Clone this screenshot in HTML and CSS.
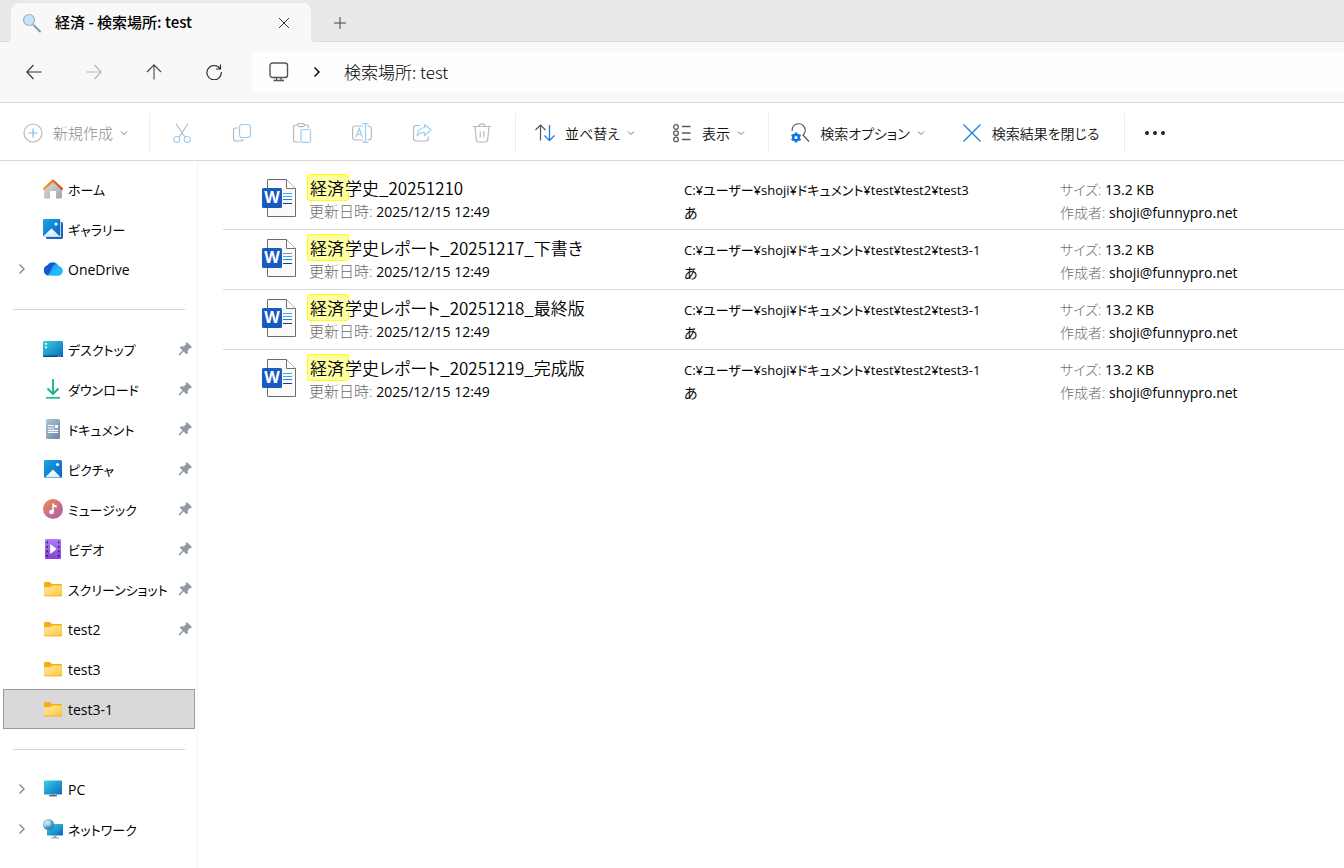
FILE: index.html
```
<!DOCTYPE html>
<html lang="ja">
<head>
    <meta charset="UTF-8">
    <meta name="viewport" content="width=device-width, initial-scale=1.0">
    <title>経済 - 検索場所: test</title>
    <link rel="stylesheet" href="styles.css">
</head>
<body>
    <!-- shared icons -->
    <svg class="defs" aria-hidden="true">
        <defs>
            <linearGradient id="gFolder" x1="0" y1="0" x2="1" y2="1"><stop offset="0" stop-color="#ffe9a6"/><stop offset="1" stop-color="#ffc637"/></linearGradient>
            <linearGradient id="gScreen" x1="0" y1="0" x2="1" y2="1"><stop offset="0" stop-color="#35d3e0"/><stop offset="1" stop-color="#0b67c0"/></linearGradient>
            <linearGradient id="gPhoto" x1="0" y1="0" x2="1" y2="1"><stop offset="0" stop-color="#1ba5ea"/><stop offset="1" stop-color="#0a62bd"/></linearGradient>
            <linearGradient id="gHill" x1="0" y1="0" x2="0" y2="1"><stop offset="0" stop-color="#fff"/><stop offset="1" stop-color="#d3ecfb"/></linearGradient>
            <linearGradient id="gRoof" x1="0" y1="0" x2="1" y2="0"><stop offset="0" stop-color="#f79a2b"/><stop offset="1" stop-color="#d04a10"/></linearGradient>
            <linearGradient id="gWall" x1="0" y1="0" x2="1" y2="1"><stop offset="0" stop-color="#e2e2e2"/><stop offset="1" stop-color="#a3a3a3"/></linearGradient>
            <linearGradient id="gDown" x1="0" y1="0" x2="0" y2="1"><stop offset="0" stop-color="#34c997"/><stop offset="1" stop-color="#0f9f8c"/></linearGradient>
            <linearGradient id="gDoc" x1="0" y1="0" x2="1" y2="1"><stop offset="0" stop-color="#b1c4d9"/><stop offset="1" stop-color="#6a86a5"/></linearGradient>
            <linearGradient id="gMusic" x1="0" y1="0" x2="1" y2="1"><stop offset="0" stop-color="#f28b4b"/><stop offset="1" stop-color="#a85bb0"/></linearGradient>
            <linearGradient id="gVideo" x1="0" y1="0" x2="0" y2="1"><stop offset="0" stop-color="#b07ff5"/><stop offset="1" stop-color="#8440d8"/></linearGradient>
            <linearGradient id="gCloud" x1="0" y1="0" x2="1" y2="1"><stop offset="0" stop-color="#1687f5"/><stop offset="1" stop-color="#23cdfb"/></linearGradient>
            <radialGradient id="gGlobe" cx="0.35" cy="0.3" r="0.8"><stop offset="0" stop-color="#a9daf2"/><stop offset="1" stop-color="#1d6fa8"/></radialGradient>
        </defs>
        <symbol id="folder" viewBox="0 0 20 20">
            <path d="M1 4.500q0-1.500 1-1.500h5l2 2h9q1 0 1 1v3H1z" fill="#f5ad12"/>
            <path d="M1 8h6.500l1.500-1.500h10V16q0 1-1 1H2q-1 0-1-1z" fill="url(#gFolder)"/>
            <path d="M1 16q0 1 1 1h16q1 0 1-1" fill="none" stroke="#eda81c" stroke-width="0.800"/>
        </symbol>
        <symbol id="pin" viewBox="0 0 14 14">
            <path d="M8.300 0.600q0.500-0.600 1.100 0l4 4q0.600 0.600 0 1.100l-0.800 0.600-0.900-0.100-2 2.200q0.500 2.200-0.500 3.700l-0.600 0.200L5.500 9.500l-3.600 3.700H0.800v-1.100l3.700-3.600L1.700 5.600l0.200-0.700q1.600-1 3.800-0.500l2.200-2-0.200-0.900z" fill="#929ba3"/>
        </symbol>
        <symbol id="down" viewBox="0 0 10 10">
            <path d="M2 3.500 5 6.500l3-3" fill="none" stroke="currentColor"/>
        </symbol>
        <symbol id="right" viewBox="0 0 10 12">
            <path d="M2.500 1.500 7 6l-4.500 4.500" fill="none" stroke="currentColor" stroke-width="1.400"/>
        </symbol>
    </svg>
    <svg class="hidden" aria-hidden="true">
        <symbol id="word" viewBox="0 0 34 40">
            <path d="M6 1.500h18.500l9 9v28H5.500v-37z" fill="#fafafa" stroke="#6d6d6d"/>
            <path d="M24.500 1.500v9h9" fill="#fff" stroke="#6d6d6d"/>
            <path d="M21 15.500h9M21 18.500h9" stroke="#41a5ee"/>
            <path d="M21 21.500h9" stroke="#2b7cd3"/>
            <path d="M21 25.500h9" stroke="#103f91"/>
            <rect x="0" y="10" width="20" height="20" rx="1.500" fill="#185abd"/>
            <text x="10" y="25" text-anchor="middle" class="word-letter">W</text>
        </symbol>
    </svg>

    <div class="tabs">
        <div class="tab">
            <svg class="tab-icon" viewBox="0 0 20 20"><path d="m10.500 11 7.500 7.500" stroke="#8998a6" stroke-width="2" stroke-linecap="round"/><path d="m10 10 2.500 2.500" stroke="#b8c3cc" stroke-width="1.500"/><circle cx="7" cy="7" r="5.500" fill="#bfe5ff" stroke="#a3b0bb" stroke-width="1.200"/></svg>
            <h1>経済 - 検索場所: test</h1>
            <button class="tab-close" aria-label="タブを閉じる"><svg viewBox="0 0 12 12"><path d="m1 1 10 10M11 1 1 11" stroke="#333"/></svg></button>
        </div>
        <button class="tab-new" aria-label="新しいタブ"><svg viewBox="0 0 12 12"><path d="M6 0v12M0 6h12" stroke="#444"/></svg></button>
    </div>

    <div class="address">
        <button class="go" aria-label="戻る"><svg viewBox="0 0 16 16"><path d="M15.500 8H1M7.500 1 0.800 8l6.700 7" fill="none" stroke="#333" stroke-width="1.100"/></svg></button>
        <button class="go" aria-label="進む" disabled><svg viewBox="0 0 16 16"><path d="M0.500 8H15M8.500 1l6.700 7-6.700 7" fill="none" stroke="#b5b5b5" stroke-width="1.100"/></svg></button>
        <button class="go" aria-label="上へ"><svg viewBox="0 0 16 16"><path d="M8 15.500V1M1 8l7-7.200L15 8" fill="none" stroke="#444" stroke-width="1.100"/></svg></button>
        <button class="go" aria-label="更新"><svg viewBox="0 0 16 16"><path d="M14 4.500A7.200 7.200 0 1 0 15.300 8M14.500 0.500v4.500H10" fill="none" stroke="#222" stroke-width="1.100"/></svg></button>
        <div class="path">
            <svg class="pc" viewBox="0 0 20 20"><rect x="1" y="1" width="17.500" height="14.500" rx="2.500" fill="none" stroke="#555" stroke-width="1.400"/><path d="M7.500 15.500v3M12 15.500v3M4.500 18.500h10.500" stroke="#555" stroke-width="1.300"/></svg>
            <svg class="sep" viewBox="0 0 10 12"><use href="#right"/></svg>
            <button class="crumb">検索場所: test</button>
        </div>
    </div>

    <div class="toolbar">
        <button class="cmd cmd-new" disabled>
            <svg class="icon" viewBox="0 0 20 20" fill="none"><circle cx="10" cy="10" r="9" stroke="#b9b9b9" stroke-width="1.200"/><path d="M10 5.500v9M5.500 10h9" stroke="#7fbceb" stroke-width="1.200"/></svg>
            新規作成
            <svg class="chev"><use href="#down"/></svg>
        </button>
        <span class="line"></span>
        <div class="edit">
            <button aria-label="切り取り" disabled><svg class="icon" viewBox="0 0 20 20" fill="none"><path d="M4 0.500 12.800 14M16 0.500 7.200 14" stroke="#b9b9b9" stroke-width="1.200"/><circle cx="4.800" cy="16.500" r="3" stroke="#9bcdf3" stroke-width="1.200"/><circle cx="15.200" cy="16.500" r="3" stroke="#9bcdf3" stroke-width="1.200"/></svg></button>
            <button aria-label="コピー" disabled><svg class="icon" viewBox="0 0 20 20" fill="none"><path d="M6 5H4Q1.500 5 1.500 7.500v8Q1.500 18 4 18h4.500q2.500 0 2.500-2" stroke="#b9b9b9" stroke-width="1.200"/><rect x="7.500" y="1.500" width="11" height="13" rx="2.500" stroke="#9bcdf3" stroke-width="1.200"/></svg></button>
            <button aria-label="貼り付け" disabled><svg class="icon" viewBox="0 0 20 20" fill="none"><path d="M5.500 2H3.500Q1.500 2 1.500 4v13q0 2 2 2H8M12.500 2h2q2 0 2 2v1" stroke="#b9b9b9" stroke-width="1.200"/><rect x="5.500" y="0.600" width="7" height="3" rx="1.500" stroke="#b9b9b9" stroke-width="1.200"/><rect x="9" y="6.500" width="9.500" height="12.800" rx="1.500" stroke="#9bcdf3" stroke-width="1.200"/></svg></button>
            <button aria-label="名前の変更" disabled><svg class="icon" viewBox="0 0 20 20" fill="none"><path d="M11 3H3.500Q0.600 3 0.600 6v8q0 3 2.900 3H11M15.500 3q3.900 0 3.900 3v8q0 3-3.900 3" stroke="#b9b9b9" stroke-width="1.200"/><path d="M3.800 14.500 7.200 5.500l3.400 9M5 11.500h4.500M13.500 0.600v18.800M10.500 0.600h6M10.500 19.400h6" stroke="#9bcdf3" stroke-width="1.200"/></svg></button>
            <button aria-label="共有" disabled><svg class="icon" viewBox="0 0 20 20" fill="none"><path d="M8 2.500H4.500Q1.500 2.500 1.500 5.500v9.500q0 3 3 3h9q3 0 3-3v-1.500" stroke="#b9b9b9" stroke-width="1.200"/><path d="M12.500 1.500 19 7l-6.500 5.500V9.500Q8 9 5 13q0.500-7.500 7.500-8.500z" stroke="#9bcdf3" stroke-width="1.200" stroke-linejoin="round"/></svg></button>
            <button aria-label="削除" disabled><svg class="icon" viewBox="0 0 20 20" fill="none"><path d="M1 3.500h18M7 3.500Q7 0.800 10 0.800t3 2.700M3 3.500l1.300 13q0.200 2.500 2.400 2.500h6.600q2.200 0 2.400-2.500L17 3.500M8.200 8v6.500M11.800 8v6.500" stroke="#b9b9b9" stroke-width="1.200"/></svg></button>
        </div>
        <span class="line"></span>
        <button class="cmd cmd-sort">
            <svg class="icon" viewBox="0 0 20 20" fill="none"><path d="M5.500 17.500V2M0.500 7l5-5 5 5" stroke="#555" stroke-width="1.200"/><path d="M14.500 2v15.500M9.500 12.500l5 5 5-5" stroke="#1a80d9" stroke-width="1.300"/></svg>
            並べ替え
            <svg class="chev"><use href="#down"/></svg>
        </button>
        <button class="cmd cmd-view">
            <svg class="icon" viewBox="0 0 20 20" fill="none" stroke="#5a5a5a" stroke-width="1.300"><circle cx="4" cy="4" r="2.300"/><circle cx="4" cy="10.200" r="2.300"/><circle cx="4" cy="16.400" r="2.300"/><path d="M10 3.500h8.500M10 10h8.500M10 16.500h8.500"/></svg>
            表示
            <svg class="chev"><use href="#down"/></svg>
        </button>
        <span class="line"></span>
        <button class="cmd cmd-option">
            <svg class="icon" viewBox="0 0 20 20" fill="none"><path d="M2.200 8A6.500 6.500 0 1 1 12.500 12.500M13 12l6 6.500" stroke="#555" stroke-width="1.200"/><circle cx="6" cy="14.500" r="2.800" stroke="#0f7bdc" stroke-width="2.500"/><path d="M6 9.500v2M6 17.500v2M1.600 12l2 1M8.600 16l2 1M1.600 17l2-1M8.600 13l2-1" stroke="#0f7bdc" stroke-width="2.400"/></svg>
            検索オプション
            <svg class="chev"><use href="#down"/></svg>
        </button>
        <button class="cmd cmd-close">
            <svg class="icon" viewBox="0 0 20 20"><path d="m1.500 1.500 17 17M18.500 1.500l-17 17" stroke="#1a80d9" stroke-width="1.300"/></svg>
            検索結果を閉じる
        </button>
        <span class="line"></span>
        <button class="more" aria-label="もっと見る"><svg class="icon" viewBox="0 0 20 20" fill="#222"><circle cx="2" cy="10" r="2"/><circle cx="10" cy="10" r="2"/><circle cx="18" cy="10" r="2"/></svg></button>
    </div>

    <div class="main">
        <nav class="sidebar">
            <ul>
                <li><a href="#"><svg class="icon" viewBox="0 0 20 20"><path d="M1 9 10 1l9 8v9q0 1.500-1.500 1.500H13V12H7v7.500H2.500Q1 19.500 1 18z" fill="url(#gWall)"/><path d="M1 9.800 10 1.600l9 8.200" fill="none" stroke="url(#gRoof)" stroke-width="2.200" stroke-linecap="round" stroke-linejoin="round"/></svg>ホーム</a></li>
                <li><a href="#"><svg class="icon" viewBox="0 0 20 20"><rect x="3" y="3" width="17" height="17" rx="1.500" fill="#1d66b8"/><rect x="0" y="0" width="18" height="18" rx="1" fill="#fff"/><rect x="0" y="0" width="17.300" height="17.300" rx="1" fill="url(#gPhoto)"/><path d="m0.500 17 8-7.500 8 7.500z" fill="url(#gHill)"/><circle cx="13" cy="5" r="1.500" fill="#fff"/></svg>ギャラリー</a></li>
                <li><a href="#" class="latin"><svg class="twist"><use href="#right"/></svg><svg class="icon" viewBox="0 0 20 20"><path d="M5.200 16.500a5.200 5.200 0 0 1-0.800-10A6.200 6.200 0 0 1 15.500 6.800a5 5 0 0 1 0 9.700z" fill="url(#gCloud)"/><path d="M5 16.500A5.300 5.300 0 0 1 4.500 6.300a6 6 0 0 1 8.500-1.500q-3 1-4.500 5t-3.500 6.700z" fill="#1b55d0"/><path d="M7 16.500q2-1.500 3.500-5T15 8q3.500 0 4.800 3a4.800 4.800 0 0 1-4.300 5.500z" fill="#22b8fa"/></svg>OneDrive</a></li>
            </ul>
            <hr>
            <ul>
                <li><a href="#"><svg class="icon" viewBox="0 0 20 20"><rect x="0" y="2" width="20" height="16" rx="1" fill="url(#gScreen)"/><path d="M0 16.500h20V17q0 1-1 1H1q-1 0-1-1z" fill="#0a4b87"/><path d="M2.200 4h1.800v1.800H2.200zM2.200 7.500h1.800v1.800H2.200zM15 16.800h1v0.800h-1zM17 16.800h1v0.800h-1z" fill="#fff"/></svg>デスクトップ<svg class="pin"><use href="#pin"/></svg></a></li>
                <li><a href="#"><svg class="icon" viewBox="0 0 20 20" fill="none"><path d="M10 0.500v14M4.500 9.500l5.500 5.500 5.500-5.500" stroke="url(#gDown)" stroke-width="1.800"/><path d="M10 0v14" stroke="#26b693" stroke-width="1.800"/><path d="M3 18.800h14" stroke="#26bd8c" stroke-width="1.800"/></svg>ダウンロード<svg class="pin"><use href="#pin"/></svg></a></li>
                <li><a href="#"><svg class="icon" viewBox="0 0 20 20"><rect x="3" y="0" width="14" height="20" rx="1.500" fill="url(#gDoc)"/><path d="M5 6.500h6M5 9h6M5 11.300h10M5 13.300h10" stroke="#fff" stroke-width="1.200"/><rect x="12" y="6" width="3" height="3" fill="#fff"/></svg>ドキュメント<svg class="pin"><use href="#pin"/></svg></a></li>
                <li><a href="#"><svg class="icon" viewBox="0 0 20 20"><rect x="1" y="1" width="18" height="18" rx="1.200" fill="url(#gPhoto)"/><path d="m2 18.500 8-8 8 8z" fill="url(#gHill)"/><circle cx="14.500" cy="5.500" r="1.600" fill="#fff"/></svg>ピクチャ<svg class="pin"><use href="#pin"/></svg></a></li>
                <li><a href="#"><svg class="icon" viewBox="0 0 20 20"><circle cx="10" cy="10" r="10" fill="url(#gMusic)"/><circle cx="8.500" cy="13" r="2.300" fill="#fff"/><path d="M9.300 13V4.500h1.500q0.500 1.800 3 2v2q-2 0-3-1V13z" fill="#fff"/></svg>ミュージック<svg class="pin"><use href="#pin"/></svg></a></li>
                <li><a href="#"><svg class="icon" viewBox="0 0 20 20"><rect x="2" y="0" width="16" height="20" rx="1" fill="url(#gVideo)"/><path d="M4.300 2.500v16M15.700 2.500v16" stroke="#3d1778" stroke-width="1.600" stroke-dasharray="1.800 2.700"/><path d="M7.200 5v10l6.500-5z" fill="#fff"/></svg>ビデオ<svg class="pin"><use href="#pin"/></svg></a></li>
                <li><a href="#"><svg class="icon"><use href="#folder"/></svg>スクリーンショット<svg class="pin"><use href="#pin"/></svg></a></li>
                <li><a href="#" class="latin"><svg class="icon"><use href="#folder"/></svg>test2<svg class="pin"><use href="#pin"/></svg></a></li>
                <li><a href="#" class="latin"><svg class="icon"><use href="#folder"/></svg>test3</a></li>
                <li><a href="#" class="latin selected"><svg class="icon"><use href="#folder"/></svg>test3-1</a></li>
            </ul>
            <hr>
            <ul>
                <li><a href="#" class="latin"><svg class="twist"><use href="#right"/></svg><svg class="icon" viewBox="0 0 20 20"><rect x="1" y="1.500" width="18" height="14" rx="0.800" fill="url(#gScreen)"/><path d="M8 15.500h4v1.500H8z" fill="#8e99a3"/><path d="M6 16.800h8" stroke="#44505c" stroke-width="1.200"/></svg>PC</a></li>
                <li><a href="#"><svg class="twist"><use href="#right"/></svg><svg class="icon" viewBox="0 0 20 20"><rect x="4" y="5" width="16" height="11.500" rx="0.800" fill="url(#gScreen)"/><path d="M10.500 16.500h3v2.300h-3zM8 18.600h8v1H8z" fill="#9aa4ad"/><circle cx="5.500" cy="5.500" r="5.500" fill="url(#gGlobe)"/><path d="M5 0.500q4 1 3 4t-3 2-2.500 2q-2-1-2.200-4Q2 1 5 0.500z" fill="#e0f2fa" opacity="0.500"/></svg>ネットワーク</a></li>
            </ul>
        </nav>

        <ul class="results">
            <li class="file">
                <svg class="doc"><use href="#word"/></svg>
                <div>
                    <p class="name"><mark>経済</mark>学史_20251210</p>
                    <p class="date"><span class="label">更新日時:</span> 2025/12/15 12:49</p>
                </div>
                <div>
                    <p class="where folder-path">C:¥ユーザー¥shoji¥ドキュメント¥test¥test2¥test3</p>
                    <p>あ</p>
                </div>
                <div>
                    <p class="where"><span class="label">サイズ:</span> 13.2 KB</p>
                    <p><span class="label">作成者:</span> shoji@funnypro.net</p>
                </div>
            </li>
            <li class="file">
                <svg class="doc"><use href="#word"/></svg>
                <div>
                    <p class="name"><mark>経済</mark>学史レポート_20251217_下書き</p>
                    <p class="date"><span class="label">更新日時:</span> 2025/12/15 12:49</p>
                </div>
                <div>
                    <p class="where folder-path">C:¥ユーザー¥shoji¥ドキュメント¥test¥test2¥test3-1</p>
                    <p>あ</p>
                </div>
                <div>
                    <p class="where"><span class="label">サイズ:</span> 13.2 KB</p>
                    <p><span class="label">作成者:</span> shoji@funnypro.net</p>
                </div>
            </li>
            <li class="file">
                <svg class="doc"><use href="#word"/></svg>
                <div>
                    <p class="name"><mark>経済</mark>学史レポート_20251218_最終版</p>
                    <p class="date"><span class="label">更新日時:</span> 2025/12/15 12:49</p>
                </div>
                <div>
                    <p class="where folder-path">C:¥ユーザー¥shoji¥ドキュメント¥test¥test2¥test3-1</p>
                    <p>あ</p>
                </div>
                <div>
                    <p class="where"><span class="label">サイズ:</span> 13.2 KB</p>
                    <p><span class="label">作成者:</span> shoji@funnypro.net</p>
                </div>
            </li>
            <li class="file">
                <svg class="doc"><use href="#word"/></svg>
                <div>
                    <p class="name"><mark>経済</mark>学史レポート_20251219_完成版</p>
                    <p class="date"><span class="label">更新日時:</span> 2025/12/15 12:49</p>
                </div>
                <div>
                    <p class="where folder-path">C:¥ユーザー¥shoji¥ドキュメント¥test¥test2¥test3-1</p>
                    <p>あ</p>
                </div>
                <div>
                    <p class="where"><span class="label">サイズ:</span> 13.2 KB</p>
                    <p><span class="label">作成者:</span> shoji@funnypro.net</p>
                </div>
            </li>
        </ul>
    </div>
</body>
</html>
```
FILE: styles.css
```
* {
    box-sizing: border-box;
}
body {
    margin: 0;
    min-height: 100vh;
    display: flex;
    flex-direction: column;
    background: #fff;
    color: #000;
    font-family: "Noto Sans CJK JP", sans-serif;
    font-size: 14px;
    font-weight: 350;
    font-feature-settings: "palt";
}
button {
    display: flex;
    align-items: center;
    justify-content: center;
    padding: 0;
    border: none;
    background: none;
    color: inherit;
    font: inherit;
    font-feature-settings: inherit;
    white-space: nowrap;
}
ul, p {
    margin: 0;
    padding: 0;
    list-style: none;
}
svg {
    flex: none;
    display: block;
}
.defs {
    position: absolute;
    width: 0;
    height: 0;
}
.hidden {
    display: none;
}
.icon {
    width: 20px;
    height: 20px;
}

/* Tabs */
.tabs {
    display: flex;
    align-items: flex-end;
    height: 42px;
    padding-left: 11px;
    background: #e8e8e8;
    box-shadow: inset 0 -1px #dcdcdc;
}
.tab {
    position: relative;
    display: flex;
    align-items: center;
    width: 300px;
    height: 39px;
    padding: 0 17px 0 11px;
    border-radius: 8px 8px 0 0;
    background: #f8f8f8;
}
.tab::before, .tab::after {
    content: "";
    position: absolute;
    bottom: 0;
    width: 4px;
    height: 4px;
}
.tab::before {
    left: -4px;
    background: radial-gradient(circle at 0 0, transparent 4px, #f8f8f8 4px);
}
.tab::after {
    right: -4px;
    background: radial-gradient(circle at 100% 0, transparent 4px, #f8f8f8 4px);
}
.tab-icon {
    width: 20px;
    height: 20px;
}
.tab h1 {
    flex: 1;
    margin: 0 0 0 13px;
    padding-bottom: 2px;
    font-size: 15px;
    font-weight: 500;
}
.tab-close, .tab-new {
    width: 20px;
    height: 39px;
}
.tab-close svg, .tab-new svg {
    width: 12px;
    height: 12px;
}
.tab-new {
    margin-left: 19px;
}

/* Address bar */
.address {
    display: flex;
    align-items: center;
    height: 61px;
    padding-left: 4px;
    background: #f8f8f8;
    border-bottom: 1px solid #d8d8d8;
}
.go {
    width: 60px;
    height: 40px;
}
.go svg {
    width: 16px;
    height: 16px;
}
.path {
    flex: 1;
    display: flex;
    align-items: center;
    height: 40px;
    margin-left: 8px;
    padding-left: 17px;
    border-radius: 4px 0 0 4px;
    background: #fdfdfd;
}
.pc {
    width: 20px;
    height: 20px;
}
.sep {
    width: 10px;
    height: 12px;
    margin: 0 22px 0 23px;
}
.crumb {
    padding-bottom: 2px;
    font-size: 17px;
    font-weight: 300;
}

/* Toolbar */
.toolbar {
    display: flex;
    align-items: center;
    height: 58px;
    padding-top: 2px;
    border-bottom: 1px solid #d8d8d8;
    color: #111;
}
.line {
    width: 1px;
    height: 40px;
    background: #ececec;
}
.cmd {
    gap: 10px;
    height: 40px;
}
.cmd:disabled {
    color: #8f8f8f;
}
.chev {
    width: 10px;
    height: 10px;
    margin-left: -4px;
    color: #777;
}
.cmd-new {
    width: 149px;
    padding-left: 3px;
    font-size: 15px;
    font-weight: 300;
}
.edit {
    display: flex;
    padding: 0 3px 0 2px;
}
.edit button {
    width: 60px;
    height: 40px;
}
.cmd-sort {
    width: 138px;
    padding-left: 1px;
}
.cmd-view {
    width: 114px;
    padding-right: 4px;
}
.cmd-option {
    width: 174px;
    padding-left: 4px;
}
.cmd-close {
    width: 181px;
    padding-right: 6px;
}
.more {
    width: 60px;
    height: 40px;
}

/* Sidebar */
.main {
    flex: 1;
    display: flex;
}
.sidebar {
    width: 198px;
    padding: 8px 2px 0 3px;
    border-right: 1px solid #f5f5f5;
    font-family: "Open Sans", "Noto Sans CJK JP", sans-serif;
    font-size: 13px;
    font-weight: 400;
}
.sidebar a {
    position: relative;
    display: flex;
    align-items: center;
    gap: 5px;
    height: 40px;
    padding: 0 3px 0 40px;
    color: #000;
    text-decoration: none;
    white-space: nowrap;
}
.sidebar .latin {
    font-size: 14px;
}
.sidebar .selected {
    background: #d9d9d9;
    outline: 1px solid #999;
    outline-offset: -1px;
}
.sidebar hr {
    height: 1px;
    margin: 20px 10px 19px;
    border: none;
    background: #d4d4d4;
}
.twist {
    position: absolute;
    left: 14px;
    width: 10px;
    height: 12px;
    color: #888;
}
.pin {
    width: 14px;
    height: 14px;
    margin-left: auto;
}

/* Search results */
.results {
    flex: 1;
    padding: 9px 0 0 25px;
}
.file {
    display: grid;
    grid-template-columns: 47px 375fr 376fr 284fr;
    height: 60px;
    padding: 8px 0 0 39px;
    border-bottom: 1px solid #d9d9d9;
    font-family: "Open Sans", "Noto Sans CJK JP", sans-serif;
    font-weight: 400;
    line-height: 22px;
    white-space: nowrap;
}
.file:last-child {
    border-bottom: none;
}
.doc {
    width: 34px;
    height: 40px;
}
.word-letter {
    fill: #fff;
    font: bold 16px "Open Sans", sans-serif;
}
.name {
    font-family: "Noto Sans CJK JP", sans-serif;
    font-size: 17px;
    font-weight: 350;
    line-height: 20px;
}
.date {
    line-height: 26px;
}
.date .label {
    font-size: 15px;
}
.where {
    line-height: 24px;
}
.folder-path {
    font-size: 13px;
}
mark {
    margin: 0 -4px 0 -2px;
    padding: 0 4px 0 2px;
    border: 1px solid #ff0;
    border-radius: 3px;
    background: #ffffa6;
    color: #000;
}
.label {
    color: #6d6d6d;
    font-weight: 300;
}
```
